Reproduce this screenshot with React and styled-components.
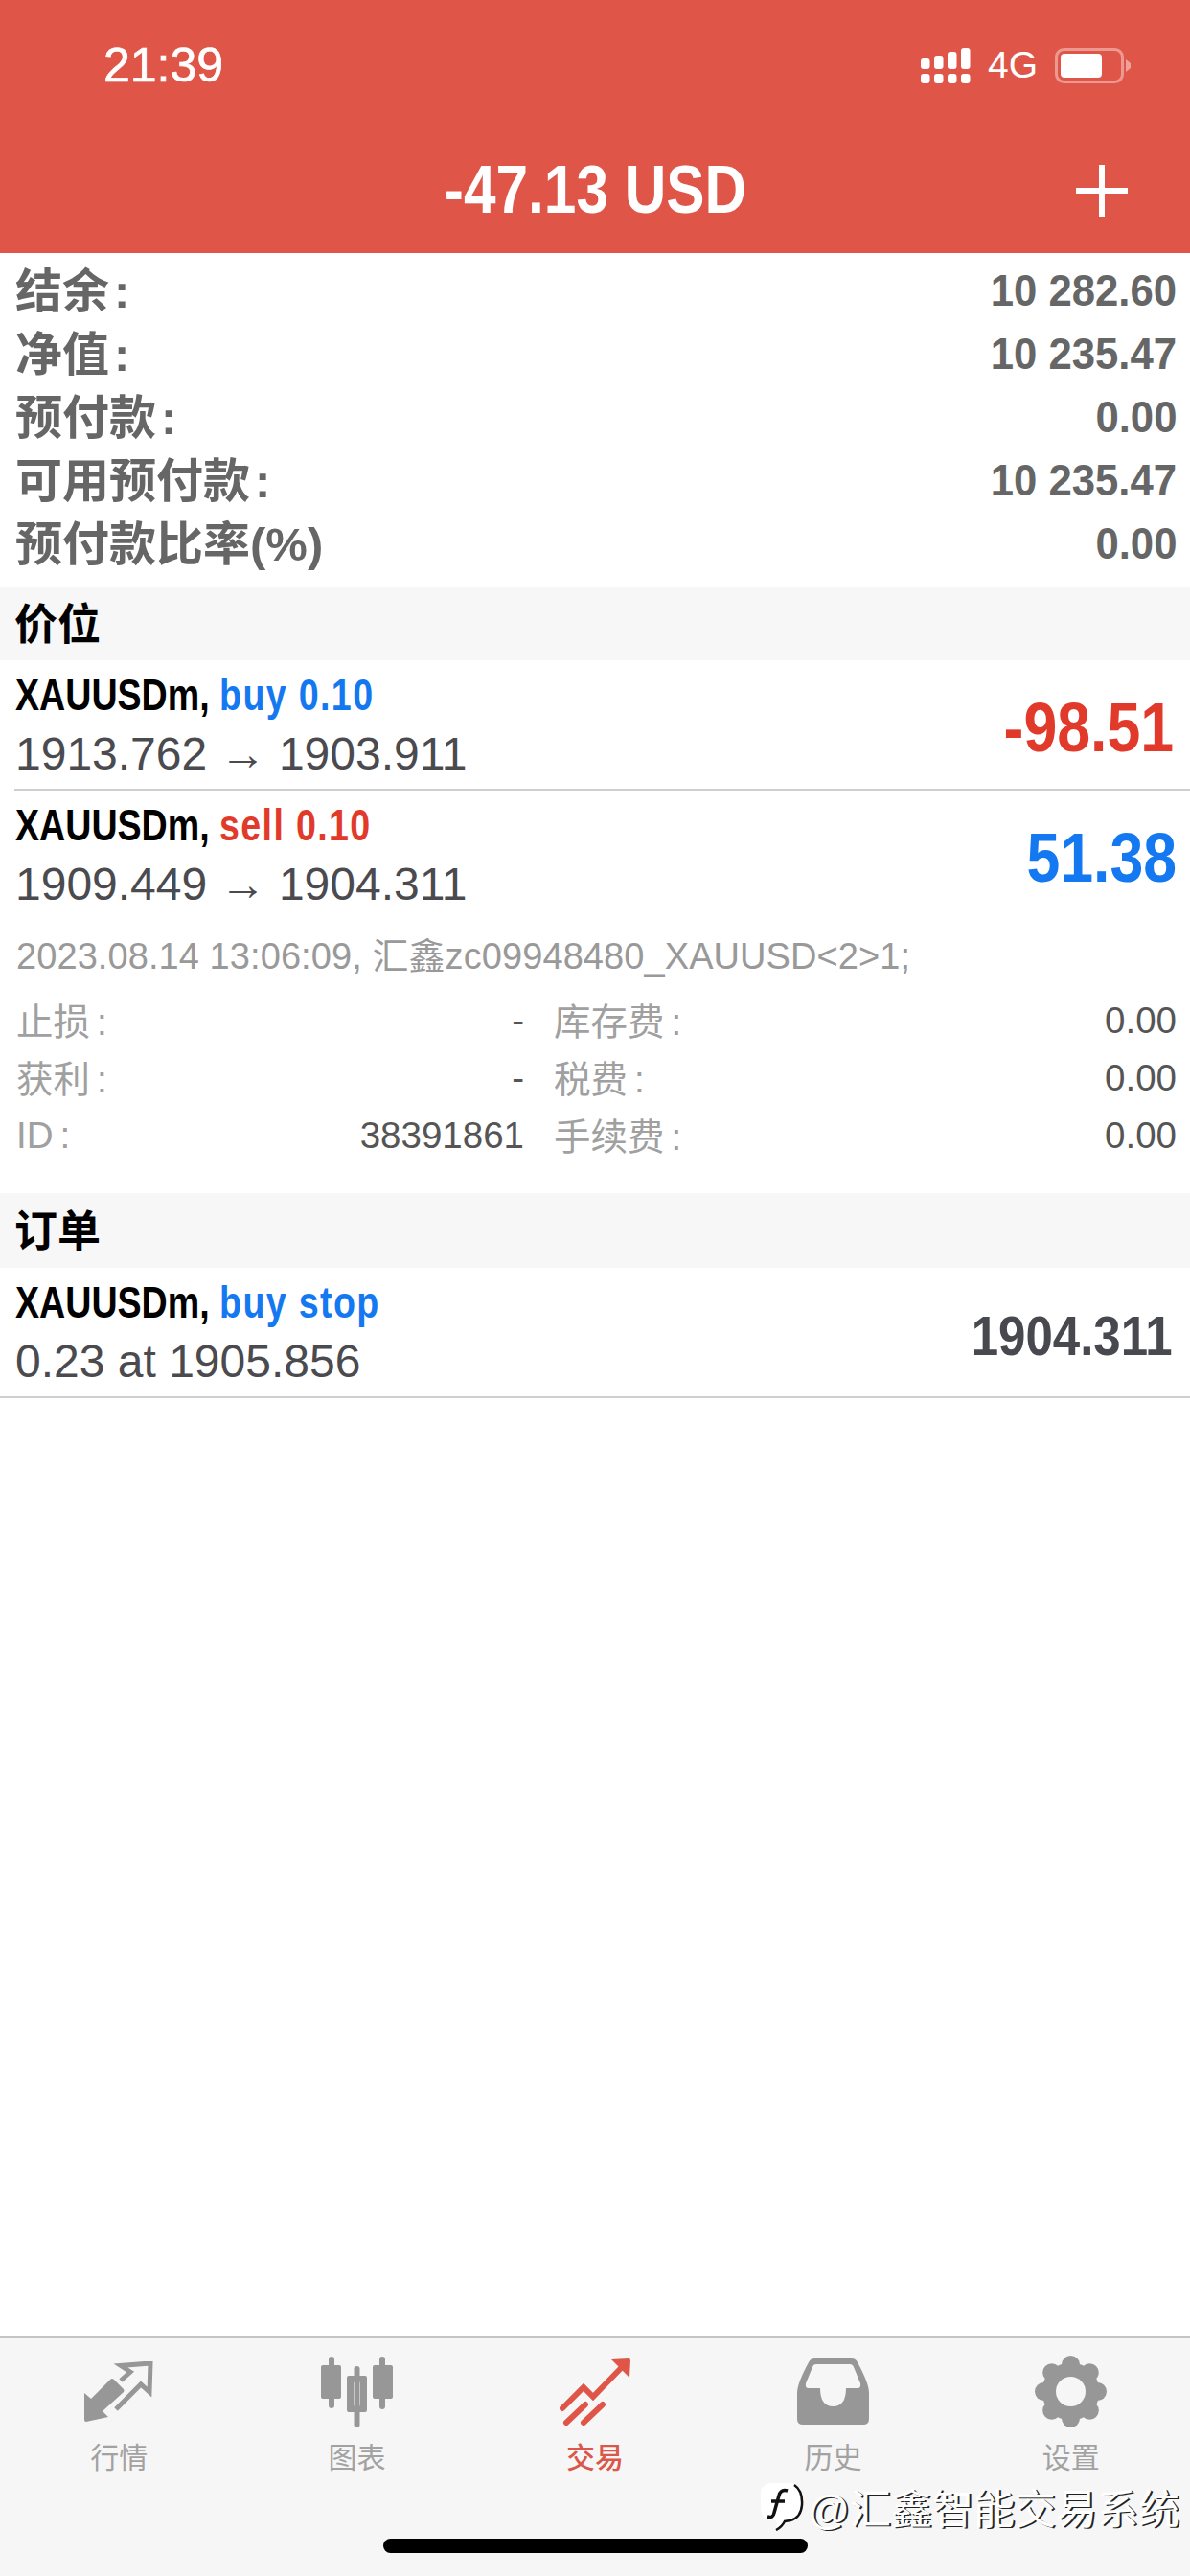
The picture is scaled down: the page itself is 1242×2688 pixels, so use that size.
import React from 'react';
import styled, { createGlobalStyle } from 'styled-components';

const FONT = `"Liberation Sans", "Noto Sans CJK SC", sans-serif`;
const RED = '#e23a2a';
const BLUE = '#1478f0';
const TAB_BG = '#f6f6f6';

const GlobalStyle = createGlobalStyle`
  html, body {
    margin: 0;
    padding: 0;
    background: #ffffff;
  }
`;

const Page = styled.div`
  position: relative;
  width: 1242px;
  min-height: 2688px;
  display: flex;
  flex-direction: column;
  overflow: hidden;
  background: #ffffff;
  font-family: ${FONT};
`;

/* header */
const Header = styled.header`
  height: 264px;
  background: #df5649;
  color: #ffffff;
  flex-shrink: 0;
`;
const StatusBar = styled.div`
  height: 136px;
  box-sizing: border-box;
  padding: 0 62px 0 108px;
  display: flex;
  align-items: center;
  justify-content: space-between;
`;
const Time = styled.span`
  font-size: 50px;
  -webkit-text-stroke: 0.7px #ffffff;
`;
const StatusIcons = styled.div`
  display: flex;
  align-items: center;
  gap: 18px;
`;
const Network = styled.span`
  font-size: 39px;
`;
const TitleBar = styled.div`
  height: 128px;
  box-sizing: border-box;
  display: grid;
  grid-template-columns: 1fr auto 1fr;
  align-items: center;
  padding: 0 65px 3px 65px;
`;
const Title = styled.div`
  grid-column: 2;
  margin-top: -3px;
  font-size: 71px;
  font-weight: 700;
  white-space: nowrap;
  transform: scaleX(0.85);
`;
const PlusButton = styled.div`
  grid-column: 3;
  justify-self: end;
  display: flex;
`;

/* shared */
const Narrow = styled.span`
  display: inline-block;
  white-space: nowrap;
  transform: scaleX(${(p) => p.$k || 0.85});
  transform-origin: ${(p) => (p.$end ? 'right' : 'left')} center;
`;
const Colon = styled.span`
  margin-left: ${(p) => p.$gap}px;
`;

/* balance */
const Summary = styled.section`
  padding: 7px 0 12px;
`;
const SummaryRow = styled.div`
  height: 66px;
  padding: 0 14px 0 16px;
  display: flex;
  align-items: center;
  justify-content: space-between;
  color: #666666;
  font-weight: 700;
`;
const SummaryLabel = styled.span`
  padding-bottom: 10px;
  font-size: 49px;
`;
const SummaryValue = styled.span`
  padding-bottom: 3px;
  font-size: 47px;
`;

const SectionHead = styled.div`
  height: ${(p) => p.$h || 76}px;
  box-sizing: border-box;
  padding: 0 0 5px 15px;
  display: flex;
  align-items: center;
  background: #f7f7f7;
  color: #000000;
  font-size: 45px;
  font-weight: 700;
`;

/* trades */
const TradeRow = styled.div`
  position: relative;
  height: 136px;
  box-sizing: border-box;
  padding: 4px 14px 0 16px;
  display: flex;
  align-items: center;
  justify-content: space-between;
  &::after {
    content: '';
    display: ${(p) => (p.$line ? 'block' : 'none')};
    position: absolute;
    right: 0;
    bottom: 0;
    left: ${(p) => (p.$line === 'full' ? 0 : 15)}px;
    height: 2px;
    background: #cfcfcf;
  }
`;
const TradeText = styled.div`
  display: flex;
  flex-direction: column;
  margin-top: -6px;
`;
const TradeTitle = styled.div`
  height: 62px;
  line-height: 62px;
  font-size: 47px;
  font-weight: 700;
  color: #000000;
`;
const Side = styled.span`
  color: ${(p) => p.$color};
  margin-left: 13px;
  letter-spacing: 1.7px;
`;
const TradeSub = styled.div`
  height: 62px;
  line-height: 62px;
  font-size: 48px;
  color: #4a4a4f;
  white-space: nowrap;
`;
const Profit = styled.span`
  margin-right: ${(p) => p.$trim || 0}px;
  font-size: ${(p) => p.$size || 72}px;
  font-weight: 700;
  color: ${(p) => p.$color};
`;

/* expanded trade detail */
const Details = styled.div`
  padding: 7px 14px 30px 17px;
`;
const Comment = styled.div`
  height: 60px;
  line-height: 60px;
  margin-bottom: 7px;
  font-size: 38px;
  letter-spacing: 0.08px;
  color: #999999;
  white-space: nowrap;
`;
const DetailGrid = styled.div`
  display: grid;
  grid-template-columns: 530px 1fr;
  column-gap: 31px;
`;
const DetailCell = styled.div`
  height: 60px;
  display: flex;
  align-items: center;
  justify-content: space-between;
  font-size: 38.5px;
`;
const DetailLabel = styled.span`
  padding-bottom: ${(p) => (p.$latin ? 0 : 5)}px;
  color: #a0a0a0;
`;
const DetailValue = styled.span`
  color: #555555;
`;

const Spacer = styled.div`
  flex: 1;
`;

/* tabs */
const TabBar = styled.nav`
  height: 250px;
  box-sizing: border-box;
  border-top: 2px solid #c4c4c4;
  background: ${TAB_BG};
  padding-top: 18px;
  display: flex;
  flex-direction: column;
`;
const Tabs = styled.div`
  display: grid;
  grid-template-columns: repeat(5, 1fr);
`;
const Tab = styled.div`
  display: flex;
  flex-direction: column;
  align-items: center;
  gap: 12px;
  color: ${(p) => (p.$active ? '#d9574b' : '#a2a2a2')};
  font-size: 30px;
  font-weight: ${(p) => (p.$active ? 500 : 400)};
`;
const TabIcon = styled.div`
  height: 75px;
  display: flex;
  align-items: center;
  justify-content: center;
`;
const TabLabel = styled.span`
  height: 40px;
  line-height: 40px;
`;
const HomeBar = styled.div`
  width: 443px;
  height: 15px;
  margin: 64px auto 0;
  border-radius: 8px;
  background: #000000;
`;

/* screenshot watermark sits over the tab bar */
const Watermark = styled.div`
  position: absolute;
  right: 11px;
  bottom: 42px;
  display: flex;
  align-items: center;
  gap: 4px;
  color: #ffffff;
  font-size: 43px;
  white-space: nowrap;
  text-shadow: 2px 1px 0 #222222;
`;

const SignalIcon = () => (
  <svg width="52" height="37" viewBox="0 0 52 37" fill="#fff">
    {[[0, 11], [14, 8], [28, 4], [42, 0]].map(([x, y]) => (
      <g key={x}>
        <rect x={x} y={y} width="9.5" height={22 - y} rx="3" />
        <rect x={x} y="27" width="9.5" height="10" rx="3" />
      </g>
    ))}
  </svg>
);

const BatteryIcon = () => (
  <svg width="79" height="37" viewBox="0 0 79 37">
    <rect x="1.5" y="1.5" width="69" height="34" rx="8" fill="none" stroke="#fff" strokeOpacity="0.4" strokeWidth="3" />
    <rect x="6" y="6" width="43" height="25" rx="4" fill="#fff" />
    <path d="M74 12 L79 16 V21 L74 25 Z" fill="#fff" fillOpacity="0.45" />
  </svg>
);

const PlusIcon = () => (
  <svg width="54" height="54" viewBox="0 0 54 54" fill="#fff">
    <rect x="24" y="0" width="6" height="54" />
    <rect x="0" y="24" width="54" height="6" />
  </svg>
);

const QuotesIcon = () => (
  <svg width="72" height="63" viewBox="0 0 72 63">
    <path d="M0 33 L7 39 L27 19 Q29 17 31 19 L41 29 Q42 31 41 32 L19 52 L25 58 L2 63 Q0 63 0 61 Z" fill="#979797" />
    <path d="M38 20 L48 11 L38 4.5 L69 2 L68 32 L59 24 L33 50" fill="none" stroke="#979797" strokeWidth="5" />
  </svg>
);

const CandlesIcon = () => (
  <svg width="75" height="74" viewBox="0 0 75 74" fill="#979797">
    <rect x="8" y="0" width="6" height="54" rx="3" />
    <rect x="0" y="9" width="21" height="35" rx="2" />
    <rect x="34.500" y="10" width="6" height="64" rx="3" />
    <path fillRule="evenodd" d="M29 20 H46 Q48 20 48 22 V56 Q48 58 46 58 H29 Q27 58 27 56 V22 Q27 20 29 20 Z M36 26 Q34 26 34 28 V50 Q34 52 36 52 H39 Q41 52 41 50 V28 Q41 26 39 26 Z" />
    <rect x="61" y="0" width="6" height="55" rx="3" />
    <rect x="54" y="9" width="21" height="35" rx="2" />
  </svg>
);

const TradeIcon = () => (
  <svg width="74" height="71" viewBox="0 0 74 71" fill="none" stroke="#df5649" strokeWidth="6" strokeLinecap="round">
    <path d="M3 53 L25 31 L35 41 L68 7" />
    <path d="M7 68 L27 49" />
    <path d="M25 68 L45 49" />
    <path d="M54 2 L72 1 Q74 1 74 3 L73 21 Z" fill="#df5649" stroke="none" />
  </svg>
);

const HistoryIcon = () => (
  <svg width="75" height="69" viewBox="0 0 75 69">
    <path
      fillRule="evenodd"
      fill="#979797"
      d="M18 0 H57 Q61 0 63 4 Q75 26 75 36 V63 Q75 69 69 69 H6 Q0 69 0 63 V36 Q0 26 12 4 Q14 0 18 0 Z M20 6 Q17 6 16 9 L9 26 Q8 31 12 31 H24 Q24 50 37.500 50 Q51 50 51 31 H63 Q67 31 66 26 L59 9 Q58 6 55 6 Z"
    />
  </svg>
);

const GearIcon = () => {
  const lobes = [0, 45, 90, 135, 180, 225, 270, 315];
  return (
    <svg width="75" height="75" viewBox="0 0 75 75" fill="#979797">
      <circle cx="37.5" cy="37.5" r="30" />
      {lobes.map((a) => (
        <circle
          key={a}
          cx={37.5 + 28 * Math.sin((a * Math.PI) / 180)}
          cy={37.5 - 28 * Math.cos((a * Math.PI) / 180)}
          r="9.5"
        />
      ))}
      <circle cx="37.5" cy="37.5" r="15.5" fill={TAB_BG} />
    </svg>
  );
};

const WatermarkLogo = () => (
  <svg width="46" height="52" viewBox="0 0 46 52">
    <path d="M12 2 H32 Q43 2 43 15 V27 Q43 39 32 40 L25 41 Q22 49 16 51 Q19 45 17 41 H10 Q1 39 1 28 V13 Q1 3 12 2 Z" fill="#ffffff" />
    <path d="M36 4 Q45 10 44 25 Q43 38 32 41 L26 42 Q23 48 17 51" fill="none" stroke="#111" strokeWidth="2.500" />
    <path d="M29 10 Q22 8 20 15 L15 33 Q14 39 8 37 M12 21 H26" fill="none" stroke="#111" strokeWidth="3.500" />
  </svg>
);

const summary = [
  ['结余', '10 282.60', true],
  ['净值', '10 235.47', true],
  ['预付款', '0.00', true],
  ['可用预付款', '10 235.47', true],
  ['预付款比率(%)', '0.00', false],
];

const details = [
  ['止损', '-', '库存费', '0.00'],
  ['获利', '-', '税费', '0.00'],
  ['ID', '38391861', '手续费', '0.00'],
];

const tabs = [
  ['行情', QuotesIcon],
  ['图表', CandlesIcon],
  ['交易', TradeIcon],
  ['历史', HistoryIcon],
  ['设置', GearIcon],
];

const Trade = ({ side, color, sub, value, valueColor, valueSize, valueK = 0.87, trim, line }) => (
  <TradeRow $line={line}>
    <TradeText>
      <TradeTitle>
        <Narrow $k={0.8}>
          XAUUSDm,<Side $color={color}>{side}</Side>
        </Narrow>
      </TradeTitle>
      <TradeSub>{sub}</TradeSub>
    </TradeText>
    <Profit $color={valueColor} $size={valueSize} $trim={trim}>
      <Narrow $k={valueK} $end>{value}</Narrow>
    </Profit>
  </TradeRow>
);

export default function App() {
  return (
    <Page>
      <GlobalStyle />
      <Header>
        <StatusBar>
          <Time>21:39</Time>
          <StatusIcons>
            <SignalIcon />
            <Network>4G</Network>
            <BatteryIcon />
          </StatusIcons>
        </StatusBar>
        <TitleBar>
          <Title>-47.13 USD</Title>
          <PlusButton>
            <PlusIcon />
          </PlusButton>
        </TitleBar>
      </Header>

      <Summary>
        {summary.map(([label, value, colon]) => (
          <SummaryRow key={label}>
            <SummaryLabel>
              {label}
              {colon && <Colon $gap={5}>:</Colon>}
            </SummaryLabel>
            <SummaryValue>
              <Narrow $k={0.93} $end>{value}</Narrow>
            </SummaryValue>
          </SummaryRow>
        ))}
      </Summary>

      <SectionHead>价位</SectionHead>
      <Trade
        side="buy 0.10"
        color={BLUE}
        sub="1913.762 → 1903.911"
        value="-98.51"
        valueColor={RED}
        trim={3}
        line="inset"
      />
      <Trade
        side="sell 0.10"
        color={RED}
        sub="1909.449 → 1904.311"
        value="51.38"
        valueColor={BLUE}
      />
      <Details>
        <Comment>2023.08.14 13:06:09, 汇鑫zc09948480_XAUUSD&lt;2&gt;1;</Comment>
        <DetailGrid>
          {details.map(([l1, v1, l2, v2]) => (
            <React.Fragment key={l1}>
              <DetailCell>
                <DetailLabel $latin={l1 === 'ID'}>
                  {l1}<Colon $gap={7}>:</Colon>
                </DetailLabel>
                <DetailValue>{v1}</DetailValue>
              </DetailCell>
              <DetailCell>
                <DetailLabel>
                  {l2}<Colon $gap={7}>:</Colon>
                </DetailLabel>
                <DetailValue>{v2}</DetailValue>
              </DetailCell>
            </React.Fragment>
          ))}
        </DetailGrid>
      </Details>

      <SectionHead $h={78}>订单</SectionHead>
      <Trade
        side="buy stop"
        color={BLUE}
        sub="0.23 at 1905.856"
        value="1904.311"
        valueColor="#48484f"
        valueSize={58}
        valueK={0.88}
        trim={4}
        line="full"
      />

      <Spacer />

      <TabBar>
        <Tabs>
          {tabs.map(([label, Icon]) => (
            <Tab key={label} $active={label === '交易'}>
              <TabIcon>
                <Icon />
              </TabIcon>
              <TabLabel>{label}</TabLabel>
            </Tab>
          ))}
        </Tabs>
        <HomeBar />
      </TabBar>

      <Watermark>
        <WatermarkLogo />
        <span>@汇鑫智能交易系统</span>
      </Watermark>
    </Page>
  );
}
